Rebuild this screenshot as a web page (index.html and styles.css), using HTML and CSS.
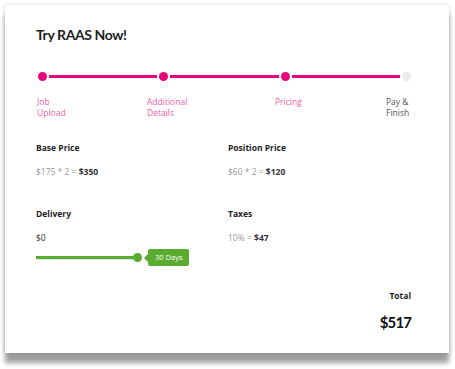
FILE: index.html
```html
<!DOCTYPE html>
<html lang="en">
<head>
    <meta charset="UTF-8">
    <meta name="viewport" content="width=device-width, initial-scale=1.0">
    <title>Try RAAS Now!</title>
    <link rel="stylesheet" href="styles.css">
</head>
<body>

    <!-- Pricing Card -->
    <section class="card">
        <h1 class="card-title">Try RAAS Now!</h1>

        <!-- Steps -->
        <div class="stepper">
            <span class="step-dot done"></span>
            <span class="step-line"></span>
            <span class="step-dot done"></span>
            <span class="step-line"></span>
            <span class="step-dot done"></span>
            <span class="step-line"></span>
            <span class="step-dot"></span>
        </div>
        <div class="step-labels">
            <span class="step-label done">Job<br>Upload</span>
            <span class="step-label done">Additional<br>Details</span>
            <span class="step-label done">Pricing</span>
            <span class="step-label">Pay &amp;<br>Finish</span>
        </div>

        <!-- Prices -->
        <div class="price-grid">
            <div class="price-item">
                <h3 class="price-label">Base Price</h3>
                <p class="price-value">$175 * 2 = <b>$350</b></p>
            </div>
            <div class="price-item">
                <h3 class="price-label">Position Price</h3>
                <p class="price-value">$60 * 2 = <b>$120</b></p>
            </div>
            <div class="price-item">
                <h3 class="price-label">Delivery</h3>
                <p class="price-value dark">$0</p>
                <div class="slider">
                    <span class="slider-track"></span>
                    <span class="slider-thumb"></span>
                    <span class="slider-tip">30 Days</span>
                </div>
            </div>
            <div class="price-item">
                <h3 class="price-label">Taxes</h3>
                <p class="price-value">10% = <b>$47</b></p>
            </div>
        </div>

        <!-- Total -->
        <div class="total">
            <h3 class="price-label">Total</h3>
            <p class="total-value">$517</p>
        </div>
    </section>

</body>
</html>
```

FILE: styles.css
```css
/* Page */
body {
    margin: 0;
    padding: 5px 6px 16px 5px;
    background: #ffffff;
    font-family: "Open Sans", "Liberation Sans", sans-serif;
    color: #222;
}

/* Card */
.card {
    background: #fff;
    padding: 20px 38px 21px 31px;
    box-shadow: 0 10px 5px rgba(0, 0, 0, 0.38), 0 0 4px rgba(0, 0, 0, 0.15);
}

.card-title {
    margin: 0;
    font-family: Lato, "Open Sans", sans-serif;
    font-size: 14px;
    line-height: 20px;
    font-weight: 700;
    letter-spacing: -0.4px;
    color: #1e1e1e;
}

/* Stepper */
.stepper {
    display: flex;
    align-items: center;
    gap: 2px;
    margin-top: 27px;
    padding-left: 2px;
}

.step-dot {
    width: 9px;
    height: 9px;
    border-radius: 50%;
    background: #ebebeb;
    flex-shrink: 0;
}

.step-dot.done {
    background: #e8067d;
}

.step-line {
    flex: 1;
    height: 3px;
    background: #e8067d;
}

.step-labels {
    display: grid;
    grid-template-columns: 110px 128px 111px auto;
    margin-top: 15px;
    padding-left: 1px;
}

.step-label {
    font-size: 8.5px;
    line-height: 11px;
    color: #555;
}

.step-label.done {
    color: #ee5fa2;
}

/* Prices */
.price-grid {
    display: grid;
    grid-template-columns: 192px 1fr;
    row-gap: 30px;
    margin-top: 24px;
}

.price-label {
    margin: 0;
    font-size: 8.5px;
    line-height: 12px;
    font-weight: 700;
    color: #1e1e1e;
}

.price-value {
    margin: 12px 0 0;
    font-size: 8.5px;
    line-height: 12px;
    color: #9a9a9a;
}

.price-value b {
    color: #333;
}

.price-value.dark {
    color: #333;
}

/* Slider */
.slider {
    display: flex;
    align-items: center;
    margin-top: 5px;
}

.slider-track {
    width: 98px;
    height: 3px;
    background: #5aac31;
    border-bottom: 1px solid #e4e4f2;
}

.slider-thumb {
    width: 9px;
    height: 9px;
    margin-left: -1px;
    border-radius: 50%;
    background: #5aac31;
}

.slider-tip {
    position: relative;
    margin-left: 6px;
    padding: 3px 7px;
    background: #5aac31;
    border-radius: 2px;
    color: #fff;
    font-size: 7.5px;
    line-height: 11px;
}

.slider-tip::before {
    content: "";
    position: absolute;
    left: -4px;
    top: 50%;
    margin-top: -4px;
    border-top: 4px solid transparent;
    border-bottom: 4px solid transparent;
    border-right: 4px solid #5aac31;
}

/* Total */
.total {
    display: flex;
    flex-direction: column;
    align-items: flex-end;
    margin-top: 24px;
}

.total-value {
    margin: 10px 0 0;
    font-family: Lato, "Open Sans", sans-serif;
    font-size: 15px;
    line-height: 20px;
    font-weight: 700;
    letter-spacing: -0.9px;
    color: #111;
}
```
